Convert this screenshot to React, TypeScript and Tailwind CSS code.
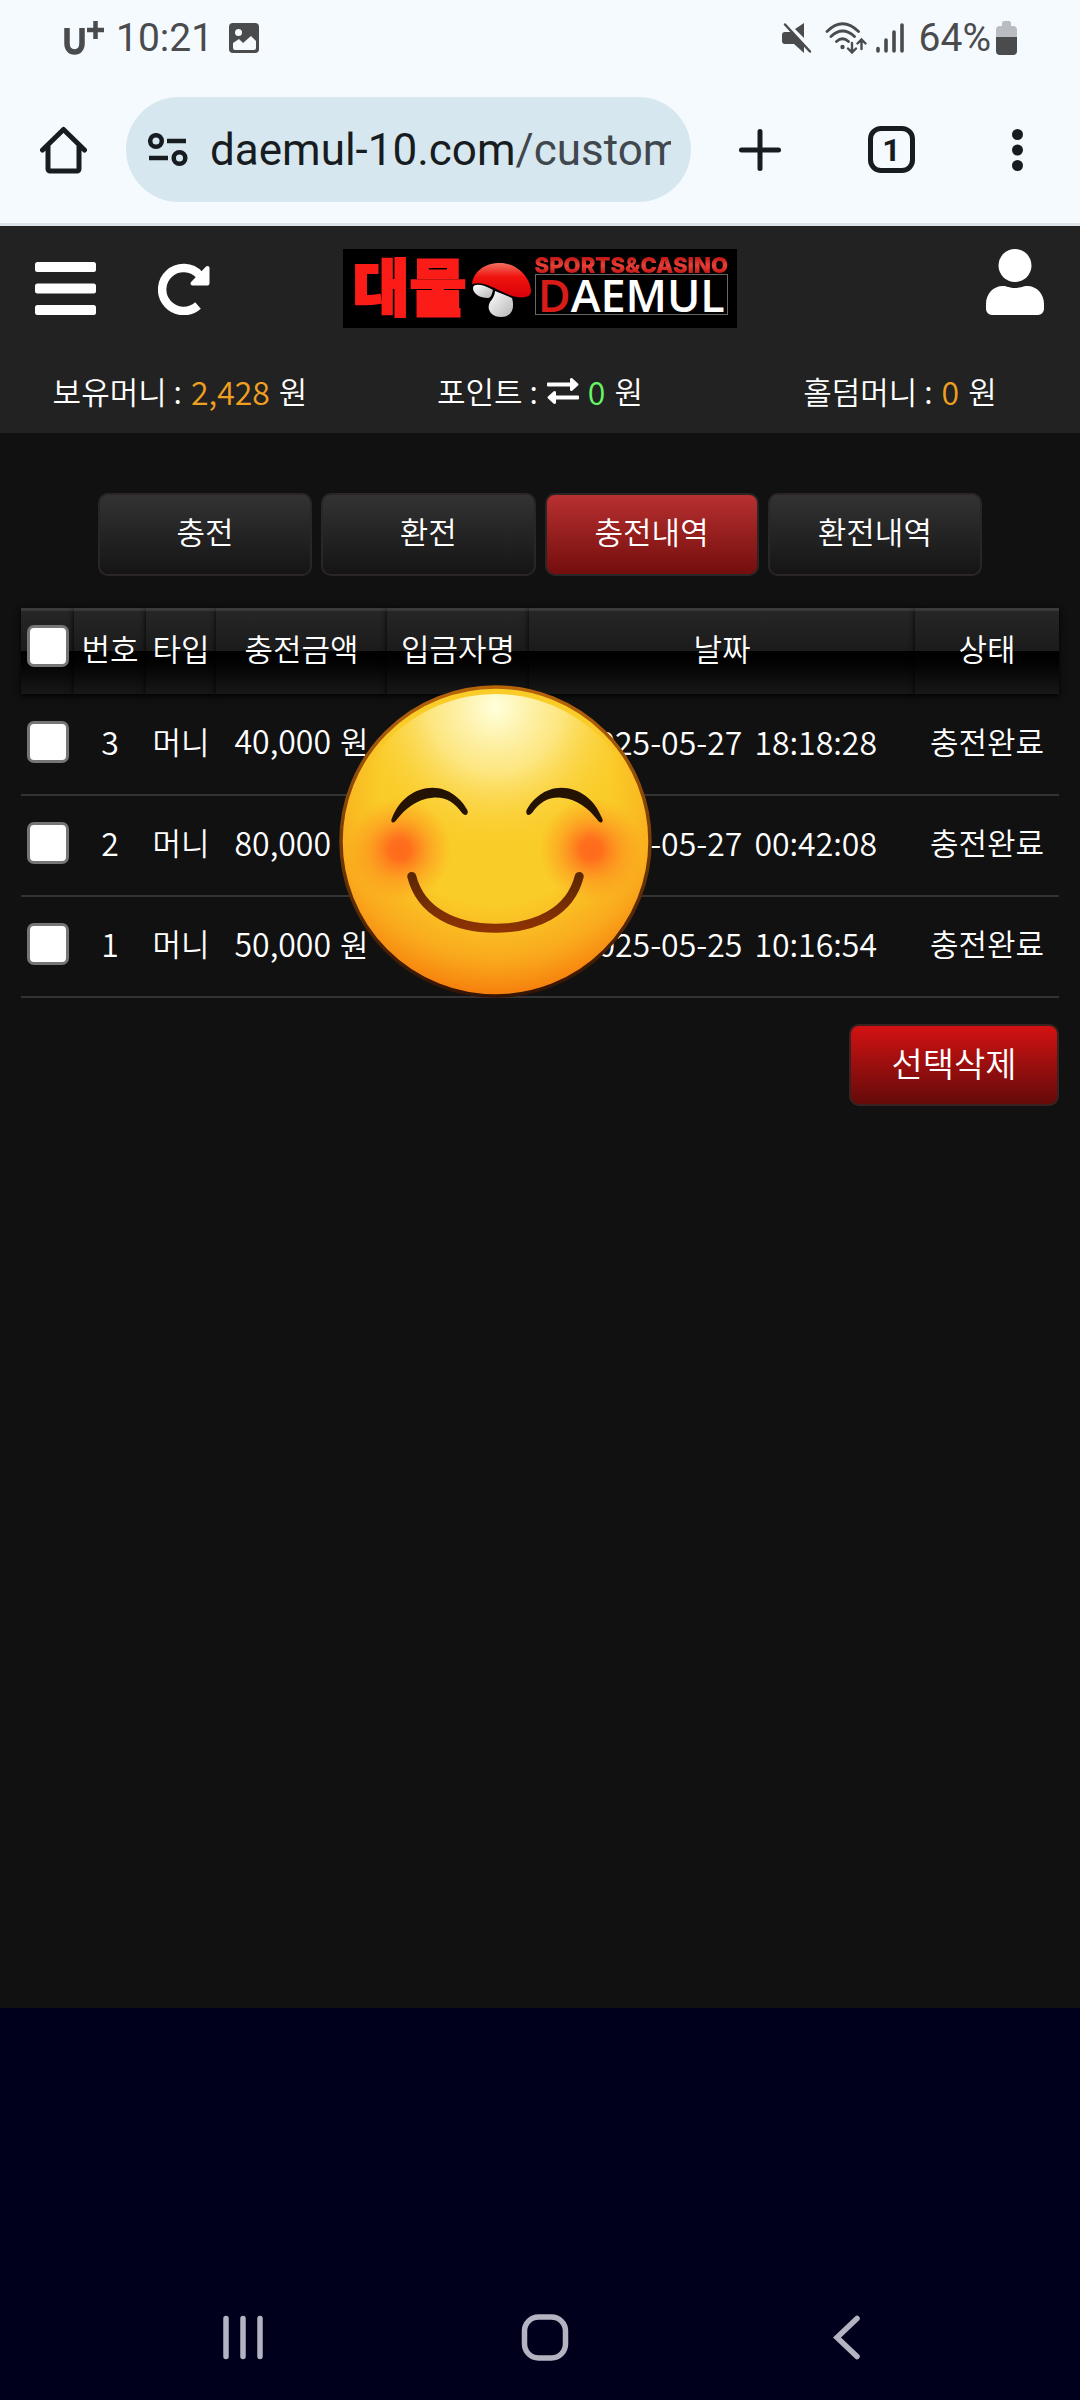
import React, { useState } from 'react';

const history = [
  { no: 3, type: '머니', amount: '40,000', name: '', date: '2025-05-27', time: '18:18:28', status: '충전완료' },
  { no: 2, type: '머니', amount: '80,000', name: '', date: '2025-05-27', time: '00:42:08', status: '충전완료' },
  { no: 1, type: '머니', amount: '50,000', name: '', date: '2025-05-25', time: '10:16:54', status: '충전완료' },
];

const tabs = ['충전', '환전', '충전내역', '환전내역'];
const headers = ['번호', '타입', '충전금액', '입금자명', '날짜', '상태'];

const StatusBar: React.FC = () => (
  <div className="flex h-[76px] items-center justify-between pl-[64px] pr-[63px] text-[39px] leading-none text-[#4a4b4d]">
    <div className="flex items-center">
      <svg className="h-[34px] w-[40px]" viewBox="0 0 40 34" fill="none" stroke="currentColor">
        <path d="M3 7v15c0 6 3 9 7.500 9s7.500-3 7.500-9V7" strokeWidth="5.500" />
        <path d="M23 9h17M31.500 0v18" strokeWidth="4.500" />
      </svg>
      <span className="ml-[12px]">10:21</span>
      <svg className="ml-[16px] h-[30px] w-[30px]" viewBox="0 0 30 30">
        <rect width="30" height="30" rx="4" fill="currentColor" />
        <circle cx="9.500" cy="9.500" r="3.500" fill="#f5faff" />
        <path d="M4 20l6-4 4 4 8-7 5 5v7a2 2 0 0 1-2 2H6a2 2 0 0 1-2-2z" fill="#f5faff" />
      </svg>
    </div>
    <div className="flex items-center">
      <svg className="h-[32px] w-[30px]" viewBox="0 0 30 32" fill="currentColor">
        <path d="M3 10h6l13 12v9l-10-9H3a3 3 0 0 1-3-3v-6a3 3 0 0 1 3-3zM13 7l9-6v15z" />
        <path d="M3 2.500l25 27" stroke="currentColor" strokeWidth="2.500" strokeLinecap="round" />
      </svg>
      <svg className="ml-[13px] h-[32px] w-[42px]" viewBox="0 0 42 32" fill="none" stroke="currentColor" strokeWidth="2.800" strokeLinecap="round">
        <path d="M2 9.500Q17.500-6 33.500 9.500M6 14.500q11.500-11 23.500 0M11.500 19.500q6-5.500 12 0" />
        <circle cx="17.500" cy="25" r="2.200" fill="currentColor" stroke="none" />
        <path d="M27 21v9M23 26.500l4 4 4-4M36.500 27v-9M32.500 21.500l4-4 4 4" strokeWidth="2.400" />
      </svg>
      <svg className="ml-[9px] h-[30px] w-[28px]" viewBox="0 0 28 30" stroke="currentColor" strokeWidth="3.600" strokeLinecap="round">
        <path d="M2 25.500v2.500M10 17v11M18 9v19M26 2v26" />
      </svg>
      <span className="ml-[15px]">64%</span>
      <svg className="ml-[5px] h-[34px] w-[21px]" viewBox="0 0 21 34">
        <path d="M6 5V2a2 2 0 0 1 2-2h5a2 2 0 0 1 2 2v3h2a4 4 0 0 1 4 4v8H0V9a4 4 0 0 1 4-4z" fill="#b9bcc0" />
        <path d="M0 16h21v14a4 4 0 0 1-4 4H4a4 4 0 0 1-4-4z" fill="currentColor" />
      </svg>
    </div>
  </div>
);

const BrowserBar: React.FC = () => (
  <div className="flex items-center border-b-[3px] border-[#dbe2e8] py-[21px] pl-[40px] pr-[57px] text-[#171c20]">
    <button aria-label="Home">
      <svg className="block h-[48px] w-[47px]" viewBox="0 0 47 48" fill="none" stroke="currentColor" strokeWidth="5" strokeLinecap="round" strokeLinejoin="round">
        <path d="M2.500 24L23.500 3.500 44.500 24M8 19v24a2 2 0 0 0 2 2h27a2 2 0 0 0 2-2V19" />
      </svg>
    </button>
    <button className="ml-[39px] flex h-[105px] min-w-0 flex-1 items-center rounded-full bg-[#d7e7ef] pl-[22px] pr-[20px]">
      <svg className="h-[34px] w-[40px] shrink-0" viewBox="0 0 40 34" fill="none" stroke="currentColor" strokeWidth="4.500">
        <circle cx="8" cy="8" r="5.800" />
        <circle cx="31.500" cy="25" r="5.800" />
        <path d="M19 8h19M1 25h19" />
      </svg>
      <span className="ml-[22px] flex-1 overflow-hidden whitespace-nowrap text-left text-[44px] leading-[56px]">
        daemul-10.com<span className="text-[#40484e]">/customer</span>
      </span>
    </button>
    <button aria-label="New tab" className="ml-[48px]">
      <svg className="block h-[42px] w-[42px]" viewBox="0 0 42 42" stroke="currentColor" strokeWidth="5" strokeLinecap="round">
        <path d="M21 2.500v37M2.500 21h37" />
      </svg>
    </button>
    <button aria-label="Tabs" className="ml-[87px] flex h-[47px] w-[47px] items-center justify-center rounded-[13px] border-[5px] border-current text-[32px] font-bold leading-none">
      1
    </button>
    <button aria-label="Menu" className="ml-[97px]">
      <svg className="block h-[42px] w-[11px]" viewBox="0 0 11 42" fill="currentColor">
        <circle cx="5.500" cy="5.500" r="5.500" />
        <circle cx="5.500" cy="21" r="5.500" />
        <circle cx="5.500" cy="36.500" r="5.500" />
      </svg>
    </button>
  </div>
);

const Logo: React.FC = () => (
  <a href="#home" className="flex h-[79px] w-[394px] items-start bg-black px-[10px] pt-[8px]">
    <span className="w-[116px] shrink-0 whitespace-nowrap text-[62px] font-black leading-[54px] text-[#fb1c18] [-webkit-text-stroke:2px_#fb1c18]">대물</span>
    <svg className="ml-[3px] mt-[5px] h-[56px] w-[60px] shrink-0" viewBox="0 0 60 56">
      <defs>
        <linearGradient id="cap" x1="0" y1="0" x2="0" y2="1">
          <stop offset="0" stopColor="#f07060" />
          <stop offset="0.400" stopColor="#f01410" />
          <stop offset="1" stopColor="#d80008" />
        </linearGradient>
        <linearGradient id="stem" x1="0" y1="0" x2="1" y2="1">
          <stop offset="0" stopColor="#ffffff" />
          <stop offset="1" stopColor="#b5b5b5" />
        </linearGradient>
      </defs>
      <path d="M1 26c0-5 10-4 20 2-1 4-2 8-5 8C8 36 1 32 1 26z" fill="url(#stem)" />
      <path d="M23 29c7 3 13 5 17 7 3 10 0 19-11 19-10 0-15-8-11-15 3-4 5-7 5-11z" fill="url(#stem)" />
      <path d="M0 22C2 8 14 1 28 1c18 0 31 16 31 28 0 8-12 8-24 3C21 26 12 19 0 22z" fill="url(#cap)" />
    </svg>
    <span className="ml-[3px] flex flex-1 flex-col whitespace-nowrap">
      <span className="bg-gradient-to-b from-[#c01414] via-[#e84038] to-[#c00c0c] bg-clip-text font-['Inter'] text-[22px] font-black leading-[17px] text-transparent">SPORTS&amp;CASINO</span>
      <span className="flex h-[41px] items-center justify-center border border-[#666] font-['Open_Sans'] text-[45px] font-semibold leading-[39px] text-white">
        <span className="text-[#d81c18]">D</span>AEMUL
      </span>
    </span>
  </a>
);

const SiteHeader: React.FC = () => (
  <header className="bg-[#222] pt-[23px]">
    <div className="flex h-[79px] items-center pl-[35px] pr-[36px]">
      <div className="flex flex-1 items-center gap-[62px]">
        <button aria-label="메뉴">
          <svg className="block h-[53px] w-[61px]" viewBox="0 0 61 53" fill="#fff">
            <rect width="61" height="10" rx="2.500" />
            <rect y="21.500" width="61" height="10" rx="2.500" />
            <rect y="43" width="61" height="10" rx="2.500" />
          </svg>
        </button>
        <button aria-label="새로고침">
          <svg className="block h-[52px] w-[52px]" viewBox="0 0 52 52" fill="none" stroke="#fff">
            <path d="M40 42.500A21.500 21.500 0 1 1 41.500 12" strokeWidth="8.500" />
            <path d="M49.500 5v15.500H34.500z" fill="#fff" strokeWidth="4" strokeLinejoin="round" />
          </svg>
        </button>
      </div>
      <Logo />
      <div className="flex flex-1 justify-end self-start">
        <button aria-label="내 정보">
          <svg className="block h-[66px] w-[58px]" viewBox="0 0 58 66" fill="#fff">
            <circle cx="29" cy="16.500" r="16.500" />
            <path d="M17 37c4 0 6 2 12 2s8-2 12-2c10 0 17 8 17 18v5a6 6 0 0 1-6 6H6a6 6 0 0 1-6-6v-5c0-10 7-18 17-18z" />
          </svg>
        </button>
      </div>
    </div>
    <div className="mt-[21px] grid h-[84px] grid-cols-3">
      <div className="flex items-center justify-center gap-[9px]">
        <span>보유머니 :</span>
        <span className="text-[32px] text-[#f0a020]">2,428</span>
        <span>원</span>
      </div>
      <div className="flex items-center justify-center gap-[9px]">
        <span>포인트 :</span>
        <button aria-label="포인트 전환">
          <svg className="block h-[26px] w-[32px]" viewBox="0 0 32 26" fill="#fff">
            <path d="M1 4.500h22V1.500c0-1.500 1.500-2 2.500-1L31 5.500q1 1 0 2l-5.500 5c-1 1-2.500.5-2.500-1V8.500H1q-1 0-1-1v-2q0-1 1-1z" />
            <path d="M31 17.500H9v-3c0-1.500-1.500-2-2.500-1L1 18.500q-1 1 0 2l5.500 5c1 1 2.500.5 2.500-1v-3h22q1 0 1-1v-2q0-1-1-1z" />
          </svg>
        </button>
        <span className="text-[32px] text-[#66f566]">0</span>
        <span>원</span>
      </div>
      <div className="flex items-center justify-center gap-[9px]">
        <span>홀덤머니 :</span>
        <span className="text-[32px] text-[#f0a020]">0</span>
        <span>원</span>
      </div>
    </div>
  </header>
);

const Smiley: React.FC = () => (
  <svg className="pointer-events-none absolute left-[318px] top-[77px] h-[313px] w-[313px]" viewBox="0 0 314 314" fill="none">
    <defs>
      <radialGradient id="low" cx="0.500" cy="0.330" r="0.680">
        <stop offset="0.550" stopColor="#f98a12" stopOpacity="0" />
        <stop offset="0.800" stopColor="#f98a12" stopOpacity="0.500" />
        <stop offset="1" stopColor="#f5780a" />
      </radialGradient>
      <radialGradient id="shine" gradientUnits="userSpaceOnUse" cx="157" cy="22" r="146">
        <stop offset="0" stopColor="#ffffdc" />
        <stop offset="0.450" stopColor="#fdeb90" stopOpacity="0.850" />
        <stop offset="1" stopColor="#facc28" stopOpacity="0" />
      </radialGradient>
      <radialGradient id="cheek">
        <stop offset="0" stopColor="#ff6a1c" />
        <stop offset="0.200" stopColor="#ff6a1c" stopOpacity="0.950" />
        <stop offset="0.600" stopColor="#ff7a1c" stopOpacity="0.420" />
        <stop offset="1" stopColor="#ff8a1c" stopOpacity="0" />
      </radialGradient>
      <linearGradient id="rim" x1="0" y1="0" x2="0" y2="1">
        <stop offset="0" stopColor="#b8640a" />
        <stop offset="1" stopColor="#341403" />
      </linearGradient>
      <linearGradient id="mouth" x1="0" y1="0" x2="0" y2="1">
        <stop offset="0" stopColor="#5c2804" />
        <stop offset="1" stopColor="#8c3203" />
      </linearGradient>
    </defs>
    <circle cx="157" cy="157" r="155" fill="#facc28" />
    <circle cx="157" cy="157" r="155" fill="url(#low)" />
    <ellipse cx="157" cy="158" rx="149" ry="149" fill="url(#shine)" />
    <circle cx="157" cy="157" r="155" stroke="url(#rim)" strokeWidth="3.500" />
    <circle cx="61" cy="165" r="52" fill="url(#cheek)" />
    <circle cx="253" cy="165" r="52" fill="url(#cheek)" />
    <path d="M53 134C60 115 76 103 94 103C110 103 123 114 129 126C130 131 126 132 123 128C116 118 107 112 94 113C79 114 66 124 58 135C55 140 51 138 53 134Z" fill="#241203" />
    <path d="M264 134C257 115 241 103 223 103C207 103 194 114 188 126C187 131 191 132 194 128C201 118 210 112 223 113C238 114 251 124 259 135C262 140 266 138 264 134Z" fill="#241203" />
    <path d="M73 192C82 228 117 244 157 244S232 228 241 192" stroke="url(#mouth)" strokeWidth="9" strokeLinecap="round" />
  </svg>
);

const checkboxClass =
  'mx-auto block h-[42px] w-[42px] appearance-none rounded-[7px] border-[3px] border-[#767676] bg-white checked:bg-[#1a73e8]';

const HistoryTable: React.FC = () => {
  const [selected, setSelected] = useState<number[]>([]);
  const all = selected.length === history.length;

  const toggle = (no: number) =>
    setSelected(selected.includes(no) ? selected.filter((n) => n !== no) : [...selected, no]);

  return (
    <div className="relative mt-[32px]">
      <table className="w-full table-fixed border-collapse text-center">
        <colgroup>
          <col className="w-[53px]" />
          <col className="w-[72px]" />
          <col className="w-[70px]" />
          <col className="w-[171px]" />
          <col className="w-[142px]" />
          <col />
          <col className="w-[144px]" />
        </colgroup>
        <thead>
          <tr className="h-[86px]">
            <th className="bg-[linear-gradient(#3a3a3a_3px,#262626_3px,#1b1b1b_50%,#000_50%,#030303_65%,#181818)] p-0 pb-[10px] shadow-[0_2px_6px_#000]">
              <input type="checkbox" aria-label="전체 선택" className={checkboxClass} checked={all} onChange={() => setSelected(all ? [] : history.map((row) => row.no))} />
            </th>
            {headers.map((header) => (
              <th key={header} className="whitespace-nowrap bg-[linear-gradient(#3a3a3a_3px,#262626_3px,#1b1b1b_50%,#000_50%,#030303_65%,#181818)] p-0 pb-[7px] font-[350] shadow-[0_2px_6px_#000]">
                {header}
              </th>
            ))}
          </tr>
        </thead>
        <tbody>
          {history.map((row) => (
            <tr key={row.no} className="h-[101px] whitespace-nowrap border-b-2 border-[#333]">
              <td className="p-0 pb-[5px]">
                <input type="checkbox" aria-label={`${row.no}번 선택`} className={checkboxClass} checked={selected.includes(row.no)} onChange={() => toggle(row.no)} />
              </td>
              <td className="p-0 pb-[7px] text-[32px]">{row.no}</td>
              <td className="p-0 pb-[7px]">{row.type}</td>
              <td className="p-0 pb-[7px]">
                <span className="mr-[9px] text-[32px]">{row.amount}</span>원
              </td>
              <td className="p-0 pb-[7px]">{row.name}</td>
              <td className="p-0 pb-[7px] pr-[38px] text-right text-[32px]">
                <span className="mr-[12px]">{row.date}</span>
                <span>{row.time}</span>
              </td>
              <td className="p-0 pb-[7px]">{row.status}</td>
            </tr>
          ))}
        </tbody>
      </table>
      <Smiley />
    </div>
  );
};

const NavBar: React.FC = () => (
  <footer className="flex h-[392px] items-end bg-[#00001c] pb-[39px] pl-[92px] pr-[82px]">
    <nav className="grid flex-1 grid-cols-3 justify-items-center">
      <button aria-label="Recents">
        <svg className="block h-[48px] w-[48px]" viewBox="0 0 48 48" stroke="#b4b3c1" strokeWidth="5.500" strokeLinecap="round">
          <path d="M7 5.500v38M24 5.500v38M41 5.500v38" />
        </svg>
      </button>
      <button aria-label="Home screen">
        <svg className="block h-[48px] w-[48px]" viewBox="0 0 48 48" fill="none" stroke="#b4b3c1" strokeWidth="5.500">
          <rect x="3.500" y="4" width="41" height="41" rx="14" />
        </svg>
      </button>
      <button aria-label="Back">
        <svg className="block h-[48px] w-[48px]" viewBox="0 0 48 48" fill="none" stroke="#b4b3c1" strokeWidth="5.500" strokeLinecap="round">
          <path d="M34 5.500L14 24.500l20 19" />
        </svg>
      </button>
    </nav>
  </footer>
);

const App: React.FC = () => {
  const [active, setActive] = useState('충전내역');

  return (
    <div className="flex min-h-screen flex-col bg-[#111]">
      <div className="bg-[#f5faff] font-['Roboto',sans-serif]">
        <StatusBar />
        <BrowserBar />
      </div>
      <div className="flex flex-1 flex-col font-['Noto_Sans_CJK_KR',sans-serif] text-[31px] font-[350] leading-[40px] text-white">
        <SiteHeader />
        <main className="flex-1 px-[21px] pt-[60px]">
          <div className="flex gap-[9px] px-[77px]">
            {tabs.map((tab) => (
              <button
                key={tab}
                onClick={() => setActive(tab)}
                className={`h-[83px] flex-1 rounded-[10px] border-2 border-[#2c2525] bg-gradient-to-b pb-[8px] ${
                  tab === active ? 'from-[#b83030] to-[#740d0d]' : 'from-[#333] to-[#151515]'
                }`}
              >
                {tab}
              </button>
            ))}
          </div>
          <HistoryTable />
          <div className="mt-[26px] flex justify-end">
            <button className="h-[82px] w-[210px] rounded-[10px] border-2 border-[#3a2222] bg-gradient-to-b from-[#d41111] to-[#650a0a] pb-[4px] text-[34px]">
              선택삭제
            </button>
          </div>
        </main>
      </div>
      <NavBar />
    </div>
  );
};

export default App;
